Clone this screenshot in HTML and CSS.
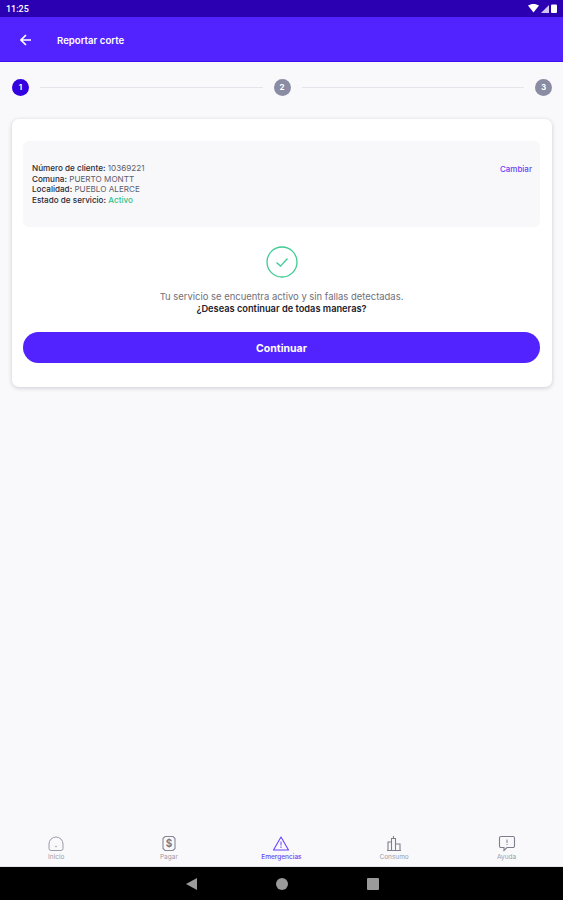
FILE: index.html
```html
<!DOCTYPE html>
<html>
  <head>
    <title>Reportar corte</title>
    <link rel="stylesheet" href="styles.css">
  </head>
  <body>
    <div class="status-bar">
      <span class="clock">11:25</span>
      <div class="status-icons">
        <svg width="11" height="9" viewBox="0 0 11 9"><path d="M0 1.6C3 -.5 8 -.5 11 1.6L5.5 8.6Z" fill="#fff"/></svg>
        <svg width="8" height="8" viewBox="0 0 8 8"><path d="M8 0V8H0Z" fill="#cfc6f2"/></svg>
        <svg width="6" height="9" viewBox="0 0 6 9"><rect x="0" y="0.5" width="6" height="8.5" rx="1" fill="#fff"/></svg>
      </div>
    </div>
    <header class="app-bar">
      <svg class="back" width="12" height="12" viewBox="0 0 12 12"><path d="M11 6H1.5M6 1L1 6l5 5" fill="none" stroke="#fff" stroke-width="1.6"/></svg>
      <span class="app-title">Reportar corte</span>
    </header>

    <main class="content">
      <div class="stepper">
        <span class="step step-active">1</span>
        <span class="step-line"></span>
        <span class="step">2</span>
        <span class="step-line"></span>
        <span class="step">3</span>
      </div>

      <section class="card">
        <div class="client-panel">
          <ul class="client-info">
            <li><span class="strong">Número de cliente:</span> 10369221</li>
            <li><span class="strong">Comuna:</span> PUERTO MONTT</li>
            <li><span class="strong">Localidad:</span> PUEBLO ALERCE</li>
            <li><span class="strong">Estado de servicio:</span> <span class="active">Activo</span></li>
          </ul>
          <a class="change">Cambiar</a>
        </div>

        <svg class="check" width="32" height="32" viewBox="0 0 32 32">
          <circle cx="16" cy="16" r="15" fill="none" stroke="#3ecb94" stroke-width="1.3"/>
          <path d="M10.5 16.5l4 3.6 7-7.6" fill="none" stroke="#3ecb94" stroke-width="1.3"/>
        </svg>
        <p class="message">Tu servicio se encuentra activo y sin fallas detectadas.</p>
        <p class="question">¿Deseas continuar de todas maneras?</p>
        <button class="primary">Continuar</button>
      </section>
    </main>

    <nav class="tabs">
      <div class="tab">
        <svg width="18" height="18" viewBox="0 0 18 18"><path d="M2 9a7 7 0 0 1 14 0v4.500a2 2 0 0 1-2 2H4a2 2 0 0 1-2-2Z" fill="none" stroke="#9a9ca8" stroke-width="1"/><circle cx="9" cy="11.500" r=".8" fill="#9a9ca8"/></svg>
        <span>Inicio</span>
      </div>
      <div class="tab">
        <svg width="18" height="18" viewBox="0 0 18 18"><path d="M5 1.500h8l2 2v10l-2 2H5l-2-2v-10Z" fill="none" stroke="#858794" stroke-width="1.100"/><text x="9" y="12" class="tab-glyph">$</text></svg>
        <span>Pagar</span>
      </div>
      <div class="tab tab-active">
        <svg width="18" height="18" viewBox="0 0 18 18"><path d="M9 2L16.500 15H1.500Z" fill="none" stroke="#6a42ff" stroke-width="1.100" stroke-linejoin="round"/><path d="M9 6.500v4M9 11.500v1.500" stroke="#6a42ff" stroke-width="1"/></svg>
        <span>Emergencias</span>
      </div>
      <div class="tab">
        <svg width="18" height="18" viewBox="0 0 18 18"><path d="M2 15.500h14M3 15.500V7h3.500v8.500M6.500 15.500V3.500h4v12M8.500 3.500V1M10.500 15.500V9H15v6.500" fill="none" stroke="#7d7f8c" stroke-width="1.100"/></svg>
        <span>Consumo</span>
      </div>
      <div class="tab">
        <svg width="18" height="18" viewBox="0 0 18 18"><path d="M3 1.500h12a1.500 1.500 0 0 1 1.500 1.500v8A1.500 1.500 0 0 1 15 12.500H9l-3 3v-3H3A1.500 1.500 0 0 1 1.500 11V3A1.500 1.500 0 0 1 3 1.500Z" fill="none" stroke="#7d7f8c" stroke-width="1.100"/><path d="M9 4.500v3.500M9 9v1" stroke="#7d7f8c" stroke-width="1"/></svg>
        <span>Ayuda</span>
      </div>
    </nav>

    <div class="system-nav">
      <svg width="11" height="12" viewBox="0 0 11 12"><path d="M11 0V12L0 6Z" fill="#9a9a9a"/></svg>
      <span class="sys-dot"></span>
      <span class="sys-square"></span>
    </div>
  </body>
</html>
```

FILE: styles.css
```css
* {
  box-sizing: border-box;
}
body {
  margin: 0;
  height: 900px;
  display: flex;
  flex-direction: column;
  background-color: #f9f9fb;
  color: #2a2a35;
  font-family: Inter, "Noto Sans", sans-serif;
}
.status-bar {
  height: 17px;
  padding: 0 6px;
  display: flex;
  align-items: center;
  justify-content: space-between;
  background-color: #2b00b3;
  color: #ffffff;
}
.clock {
  font-size: 9px;
  font-family: Roboto, sans-serif;
  font-weight: 500;
}
.status-icons {
  display: flex;
  align-items: center;
  gap: 2px;
}
.app-bar {
  height: 45px;
  padding-left: 20px;
  padding-top: 2px;
  display: flex;
  align-items: center;
  gap: 25px;
  background-color: #5222ff;
  border-bottom: 1px solid #3d10ee;
}
.app-title {
  color: #ffffff;
  font-size: 9.600px;
  font-weight: 600;
}
.content {
  flex: 1;
  padding: 16px 11px 0 12px;
}
.stepper {
  height: 18px;
  display: flex;
  align-items: center;
  gap: 11px;
}
.step {
  width: 17px;
  height: 17px;
  flex: none;
  display: flex;
  align-items: center;
  justify-content: center;
  border-radius: 50%;
  background-color: #8a8ca3;
  color: #ffffff;
  font-size: 8px;
  font-weight: 700;
}
.step-active {
  background-color: #3300e0;
}
.step-line {
  flex: 1;
  height: 1px;
  background-color: #e4e4ea;
}
.card {
  margin-top: 23px;
  height: 268px;
  padding: 22px 12px 0 11px;
  display: flex;
  flex-direction: column;
  align-items: center;
  background-color: #ffffff;
  border-radius: 7px;
  box-shadow: 0 1px 4px rgba(40, 40, 70, 0.22);
}
.client-panel {
  align-self: stretch;
  height: 86px;
  padding: 22px 8px 0 9px;
  display: flex;
  justify-content: space-between;
  align-items: flex-start;
  background-color: #f8f8fa;
  border-radius: 6px;
}
.client-info {
  margin: 0;
  padding: 0;
  list-style: none;
  font-size: 8.150px;
  line-height: 10.500px;
  color: #60606a;
}
.strong {
  color: #2a2a35;
  font-weight: 500;
}
.active {
  color: #2fc48d;
  font-weight: 500;
}
.change {
  color: #6a42f5;
  font-size: 8px;
  font-weight: 500;
  line-height: 10.500px;
  padding-top: 1px;
}
.check {
  margin-top: 19px;
}
.message {
  margin: 13px 0 0;
  color: #70707a;
  font-size: 9.450px;
  line-height: 12px;
}
.question {
  margin: 0;
  color: #22222c;
  font-size: 9.250px;
  font-weight: 600;
  line-height: 12px;
}
.primary {
  align-self: stretch;
  height: 31px;
  margin-top: 17px;
  padding-top: 2px;
  border: none;
  border-radius: 16px;
  background-color: #5222ff;
  color: #ffffff;
  font-family: inherit;
  font-size: 10.500px;
  font-weight: 700;
}
.tabs {
  height: 37px;
  padding: 0 0 5px;
  display: flex;
  justify-content: space-around;
  align-items: flex-end;
  background-color: #f9f9fb;
  border-bottom: 1px solid #e4e4ea;
}
.tab {
  width: 113px;
  display: flex;
  flex-direction: column;
  align-items: center;
  color: #9a9ca8;
  font-size: 6.500px;
  line-height: 8px;
}
.tab-active {
  color: #6a42f5;
  font-weight: 500;
}
.tab-glyph {
  fill: #777986;
  font-size: 10px;
  font-weight: 700;
  text-anchor: middle;
}
.system-nav {
  height: 33px;
  padding-left: 186px;
  display: flex;
  align-items: center;
  gap: 79px;
  background-color: #000000;
}
.sys-dot {
  width: 12px;
  height: 12px;
  border-radius: 50%;
  background-color: #9a9a9a;
}
.sys-square {
  width: 12px;
  height: 12px;
  border-radius: 1px;
  background-color: #9a9a9a;
}
```
